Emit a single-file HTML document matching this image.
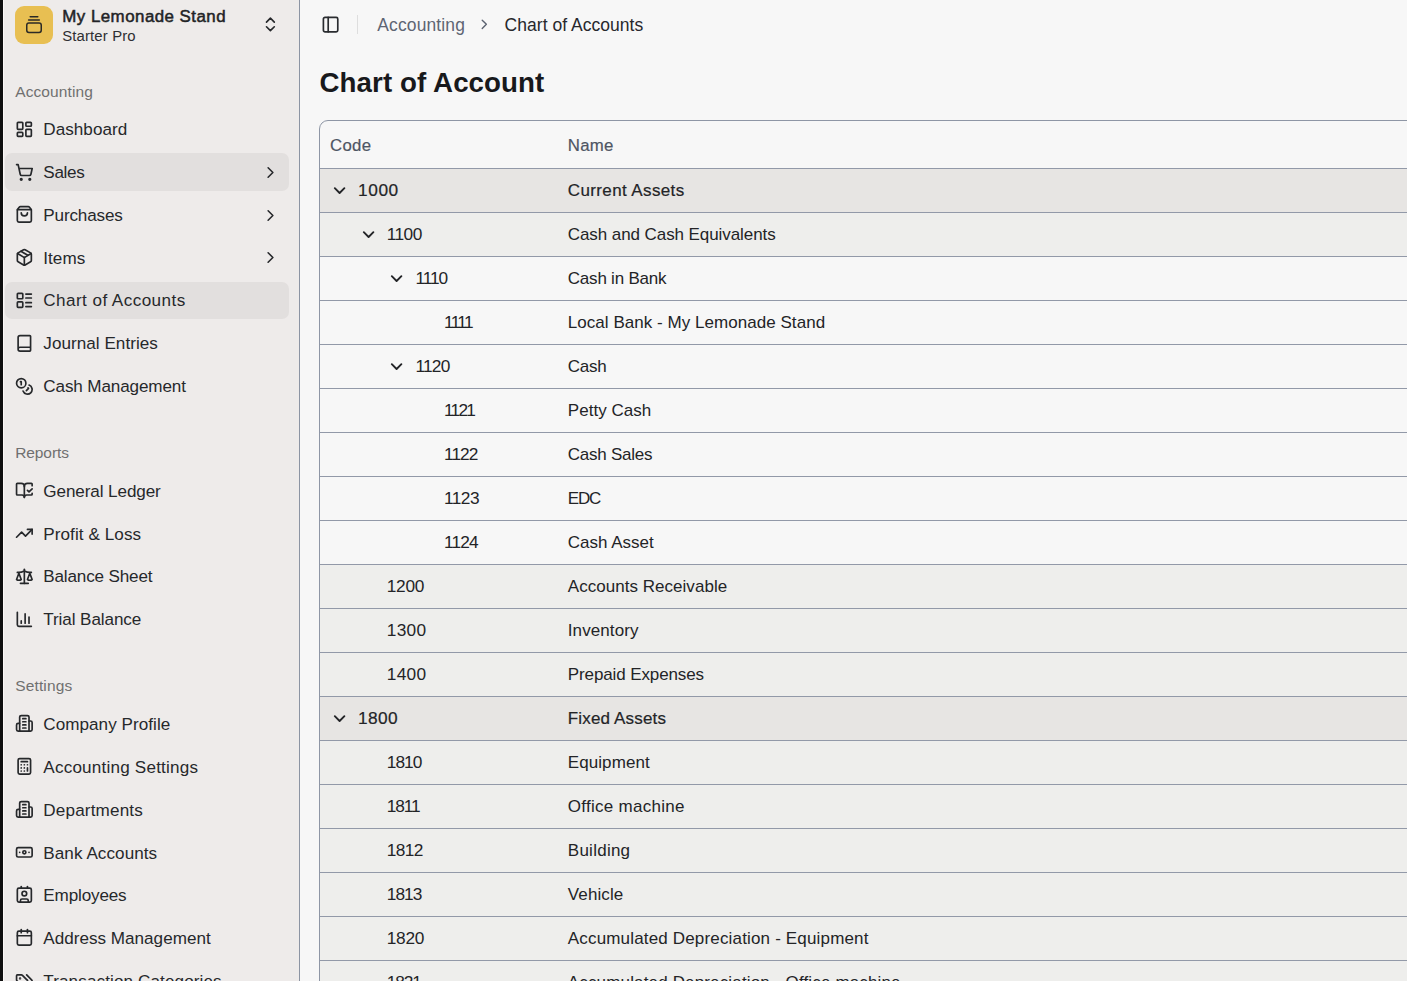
<!DOCTYPE html>
<html><head><meta charset="utf-8">
<style>
*{box-sizing:border-box;margin:0;padding:0}
html,body{width:1407px;height:981px;overflow:hidden}
body{background:#f7f7f7;font-family:"Liberation Sans",sans-serif;position:relative}
.abs,.t,.ic{position:absolute}
.t{white-space:nowrap;line-height:1}
</style></head>
<body>
<div class="abs" style="left:0;top:0;width:3px;height:981px;background:#0f0f0f"></div>
<div class="abs" style="left:3px;top:0;width:1px;height:981px;background:#fbf8f7"></div>
<div class="abs" style="left:4px;top:0;width:295px;height:981px;background:#eeebea"></div>
<div class="abs" style="left:299px;top:0;width:1px;height:981px;background:#8c94a3"></div>
<div class="abs" style="left:15px;top:6px;width:38px;height:38px;border-radius:9px;background:#e8bf52"></div>
<svg class="abs" style="left:15px;top:6px;width:38px;height:38px" viewBox="0 0 38 38" fill="none" stroke="#2b2a26" stroke-width="1.5" stroke-linecap="round"><path d="M15.2 10.8h7.6"/><path d="M13.6 13.9h10.7"/><rect x="11.75" y="17.05" width="14.5" height="9.5" rx="2.2"/></svg>
<div class="t" style="left:62.30px;top:9px;font-size:16.9px;color:#222326;font-weight:normal;letter-spacing:0.466px;-webkit-text-stroke:0.5px #222326;">My Lemonade Stand</div>
<div class="t" style="left:62.20px;top:29px;font-size:14.9px;color:#2e2f33;font-weight:normal;letter-spacing:0.140px;">Starter Pro</div>
<svg class="ic" style="left:261.20px;top:15.35px;width:18.8px;height:18.8px" viewBox="0 0 24 24" fill="none" stroke="#26282b" stroke-width="2.1" stroke-linecap="round" stroke-linejoin="round"><path d="m7 15 5 5 5-5"/><path d="m7 9 5-5 5 5"/></svg>
<div class="t" style="left:15.20px;top:84px;font-size:15.5px;color:#707070;font-weight:normal;letter-spacing:0.113px;">Accounting</div>
<svg class="ic" style="left:14.80px;top:119.85px;width:18.7px;height:18.7px" viewBox="0 0 24 24" fill="none" stroke="#26282b" stroke-width="2.15" stroke-linecap="round" stroke-linejoin="round"><rect width="7" height="9" x="3" y="3" rx="1"/><rect width="7" height="5" x="14" y="3" rx="1"/><rect width="7" height="9" x="14" y="12" rx="1"/><rect width="7" height="5" x="3" y="16" rx="1"/></svg>
<div class="t" style="left:43.30px;top:121px;font-size:17.1px;color:#26282b;font-weight:normal;letter-spacing:0.041px;">Dashboard</div>
<div class="abs" style="left:5px;top:153.40px;width:284.4px;height:37.7px;border-radius:7px;background:#e2dfde"></div>
<svg class="ic" style="left:14.80px;top:162.65px;width:18.7px;height:18.7px" viewBox="0 0 24 24" fill="none" stroke="#26282b" stroke-width="2.15" stroke-linecap="round" stroke-linejoin="round"><circle cx="8" cy="21" r="1"/><circle cx="19" cy="21" r="1"/><path d="M2.05 2.05h2l2.66 12.42a2 2 0 0 0 2 1.58h9.78a2 2 0 0 0 1.95-1.57l1.65-7.43H5.12"/></svg>
<div class="t" style="left:43.30px;top:164px;font-size:17.1px;color:#26282b;font-weight:normal;letter-spacing:-0.300px;">Sales</div>
<svg class="ic" style="left:260.90px;top:162.70px;width:19px;height:19px" viewBox="0 0 24 24" fill="none" stroke="#26282b" stroke-width="2" stroke-linecap="round" stroke-linejoin="round"><path d="m9 18 6-6-6-6"/></svg>
<svg class="ic" style="left:14.80px;top:205.45px;width:18.7px;height:18.7px" viewBox="0 0 24 24" fill="none" stroke="#26282b" stroke-width="2.15" stroke-linecap="round" stroke-linejoin="round"><path d="M16 10a4 4 0 0 1-8 0"/><path d="M3.103 6.034h17.794"/><path d="M3.4 5.467a2 2 0 0 0-.4 1.2V20a2 2 0 0 0 2 2h14a2 2 0 0 0 2-2V6.667a2 2 0 0 0-.4-1.2l-2-2.667A2 2 0 0 0 17 2H7a2 2 0 0 0-1.6.8z"/></svg>
<div class="t" style="left:43.30px;top:207px;font-size:17.1px;color:#26282b;font-weight:normal;letter-spacing:-0.159px;">Purchases</div>
<svg class="ic" style="left:260.90px;top:205.50px;width:19px;height:19px" viewBox="0 0 24 24" fill="none" stroke="#26282b" stroke-width="2" stroke-linecap="round" stroke-linejoin="round"><path d="m9 18 6-6-6-6"/></svg>
<svg class="ic" style="left:14.80px;top:248.25px;width:18.7px;height:18.7px" viewBox="0 0 24 24" fill="none" stroke="#26282b" stroke-width="2.15" stroke-linecap="round" stroke-linejoin="round"><path d="M11 21.73a2 2 0 0 0 2 0l7-4A2 2 0 0 0 21 16V8a2 2 0 0 0-1-1.73l-7-4a2 2 0 0 0-2 0l-7 4A2 2 0 0 0 3 8v8a2 2 0 0 0 1 1.73z"/><path d="M12 22V12"/><path d="m3.3 7 7.703 4.734a2 2 0 0 0 1.994 0L20.7 7"/><path d="m7.5 4.27 9 5.15"/></svg>
<div class="t" style="left:43.30px;top:250px;font-size:17.1px;color:#26282b;font-weight:normal;letter-spacing:0.025px;">Items</div>
<svg class="ic" style="left:260.90px;top:248.30px;width:19px;height:19px" viewBox="0 0 24 24" fill="none" stroke="#26282b" stroke-width="2" stroke-linecap="round" stroke-linejoin="round"><path d="m9 18 6-6-6-6"/></svg>
<div class="abs" style="left:5px;top:281.80px;width:284.4px;height:37.7px;border-radius:7px;background:#e2dfde"></div>
<svg class="ic" style="left:14.80px;top:291.05px;width:18.7px;height:18.7px" viewBox="0 0 24 24" fill="none" stroke="#26282b" stroke-width="2.15" stroke-linecap="round" stroke-linejoin="round"><rect width="7" height="7" x="3" y="3" rx="1"/><rect width="7" height="7" x="3" y="14" rx="1"/><path d="M14 4h7"/><path d="M14 9h7"/><path d="M14 15h7"/><path d="M14 20h7"/></svg>
<div class="t" style="left:43.30px;top:292px;font-size:17.1px;color:#26282b;font-weight:normal;letter-spacing:0.438px;">Chart of Accounts</div>
<svg class="ic" style="left:14.80px;top:333.85px;width:18.7px;height:18.7px" viewBox="0 0 24 24" fill="none" stroke="#26282b" stroke-width="2.15" stroke-linecap="round" stroke-linejoin="round"><path d="M4 19.5v-15A2.5 2.5 0 0 1 6.5 2H19a1 1 0 0 1 1 1v18a1 1 0 0 1-1 1H6.5a1 1 0 0 1 0-5H20"/></svg>
<div class="t" style="left:43.30px;top:335px;font-size:17.1px;color:#26282b;font-weight:normal;letter-spacing:0.036px;">Journal Entries</div>
<svg class="ic" style="left:14.80px;top:376.65px;width:18.7px;height:18.7px" viewBox="0 0 24 24" fill="none" stroke="#26282b" stroke-width="2.15" stroke-linecap="round" stroke-linejoin="round"><circle cx="8" cy="8" r="6"/><path d="M18.09 10.37A6 6 0 1 1 10.34 18"/><path d="M7 6h1v4"/><path d="m16.71 13.88.7.71-2.82 2.82"/></svg>
<div class="t" style="left:43.30px;top:378px;font-size:17.1px;color:#26282b;font-weight:normal;letter-spacing:-0.130px;">Cash Management</div>
<div class="t" style="left:15.20px;top:445px;font-size:15.5px;color:#707070;font-weight:normal;letter-spacing:-0.083px;">Reports</div>
<svg class="ic" style="left:14.80px;top:481.45px;width:18.7px;height:18.7px" viewBox="0 0 24 24" fill="none" stroke="#26282b" stroke-width="2.15" stroke-linecap="round" stroke-linejoin="round"><path d="M12 21V7"/><path d="m16 12 2 2 4-4"/><path d="M22 6V4a1 1 0 0 0-1-1h-5a4 4 0 0 0-4 4 4 4 0 0 0-4-4H3a1 1 0 0 0-1 1v13a1 1 0 0 0 1 1h6a3 3 0 0 1 3 3 3 3 0 0 1 3-3h6a1 1 0 0 0 1-1v-1.3"/></svg>
<div class="t" style="left:43.30px;top:483px;font-size:17.1px;color:#26282b;font-weight:normal;letter-spacing:-0.098px;">General Ledger</div>
<svg class="ic" style="left:14.80px;top:524.20px;width:18.7px;height:18.7px" viewBox="0 0 24 24" fill="none" stroke="#26282b" stroke-width="2.15" stroke-linecap="round" stroke-linejoin="round"><polyline points="22 7 13.5 15.5 8.5 10.5 2 17"/><polyline points="16 7 22 7 22 13"/></svg>
<div class="t" style="left:43.30px;top:526px;font-size:17.1px;color:#26282b;font-weight:normal;letter-spacing:0.074px;">Profit &amp; Loss</div>
<svg class="ic" style="left:14.80px;top:566.95px;width:18.7px;height:18.7px" viewBox="0 0 24 24" fill="none" stroke="#26282b" stroke-width="2.15" stroke-linecap="round" stroke-linejoin="round"><path d="m16 16 3-8 3 8c-.87.65-1.92 1-3 1s-2.13-.35-3-1Z"/><path d="m2 16 3-8 3 8c-.87.65-1.920 1-3 1s-2.13-.35-3-1Z"/><path d="M7 21h10"/><path d="M12 3v18"/><path d="M3 7h2c2 0 5-1 7-2 2 1 5 2 7 2h2"/></svg>
<div class="t" style="left:43.30px;top:568px;font-size:17.1px;color:#26282b;font-weight:normal;letter-spacing:-0.167px;">Balance Sheet</div>
<svg class="ic" style="left:14.80px;top:609.70px;width:18.7px;height:18.7px" viewBox="0 0 24 24" fill="none" stroke="#26282b" stroke-width="2.15" stroke-linecap="round" stroke-linejoin="round"><path d="M3 3v16a2 2 0 0 0 2 2h16"/><path d="M18 17V9"/><path d="M13 17V5"/><path d="M8 17v-3"/></svg>
<div class="t" style="left:43.30px;top:611px;font-size:17.1px;color:#26282b;font-weight:normal;letter-spacing:-0.092px;">Trial Balance</div>
<div class="t" style="left:15.20px;top:678px;font-size:15.5px;color:#707070;font-weight:normal;letter-spacing:0.141px;">Settings</div>
<svg class="ic" style="left:14.80px;top:714.35px;width:18.7px;height:18.7px" viewBox="0 0 24 24" fill="none" stroke="#26282b" stroke-width="2.15" stroke-linecap="round" stroke-linejoin="round"><path d="M6 22V4a2 2 0 0 1 2-2h8a2 2 0 0 1 2 2v18Z"/><path d="M6 12H4a2 2 0 0 0-2 2v6a2 2 0 0 0 2 2h2"/><path d="M18 9h2a2 2 0 0 1 2 2v9a2 2 0 0 1-2 2h-2"/><path d="M10 6h4"/><path d="M10 10h4"/><path d="M10 14h4"/><path d="M10 18h4"/></svg>
<div class="t" style="left:43.30px;top:716px;font-size:17.1px;color:#26282b;font-weight:normal;letter-spacing:0.044px;">Company Profile</div>
<svg class="ic" style="left:14.80px;top:757.10px;width:18.7px;height:18.7px" viewBox="0 0 24 24" fill="none" stroke="#26282b" stroke-width="2.15" stroke-linecap="round" stroke-linejoin="round"><rect width="16" height="20" x="4" y="2" rx="2"/><line x1="8" x2="16" y1="6" y2="6"/><line x1="16" x2="16" y1="14" y2="18"/><path d="M16 10h.01"/><path d="M12 10h.01"/><path d="M8 10h.01"/><path d="M12 14h.01"/><path d="M8 14h.01"/><path d="M12 18h.01"/><path d="M8 18h.01"/></svg>
<div class="t" style="left:43.30px;top:759px;font-size:17.1px;color:#26282b;font-weight:normal;letter-spacing:0.200px;">Accounting Settings</div>
<svg class="ic" style="left:14.80px;top:799.85px;width:18.7px;height:18.7px" viewBox="0 0 24 24" fill="none" stroke="#26282b" stroke-width="2.15" stroke-linecap="round" stroke-linejoin="round"><path d="M6 22V4a2 2 0 0 1 2-2h8a2 2 0 0 1 2 2v18Z"/><path d="M6 12H4a2 2 0 0 0-2 2v6a2 2 0 0 0 2 2h2"/><path d="M18 9h2a2 2 0 0 1 2 2v9a2 2 0 0 1-2 2h-2"/><path d="M10 6h4"/><path d="M10 10h4"/><path d="M10 14h4"/><path d="M10 18h4"/></svg>
<div class="t" style="left:43.30px;top:802px;font-size:17.1px;color:#26282b;font-weight:normal;letter-spacing:0.160px;">Departments</div>
<svg class="ic" style="left:14.80px;top:842.60px;width:18.7px;height:18.7px" viewBox="0 0 24 24" fill="none" stroke="#26282b" stroke-width="2.15" stroke-linecap="round" stroke-linejoin="round"><rect width="20" height="12" x="2" y="6" rx="2"/><circle cx="12" cy="12" r="2"/><path d="M6 12h.01M18 12h.01"/></svg>
<div class="t" style="left:43.30px;top:845px;font-size:17.1px;color:#26282b;font-weight:normal;letter-spacing:0.066px;">Bank Accounts</div>
<svg class="ic" style="left:14.80px;top:885.35px;width:18.7px;height:18.7px" viewBox="0 0 24 24" fill="none" stroke="#26282b" stroke-width="2.15" stroke-linecap="round" stroke-linejoin="round"><path d="M16 2v2"/><path d="M7 22v-2a2 2 0 0 1 2-2h6a2 2 0 0 1 2 2v2"/><path d="M8 2v2"/><circle cx="12" cy="11" r="3"/><rect x="3" y="4" width="18" height="18" rx="2"/></svg>
<div class="t" style="left:43.30px;top:887px;font-size:17.1px;color:#26282b;font-weight:normal;letter-spacing:-0.150px;">Employees</div>
<svg class="ic" style="left:14.80px;top:928.10px;width:18.7px;height:18.7px" viewBox="0 0 24 24" fill="none" stroke="#26282b" stroke-width="2.15" stroke-linecap="round" stroke-linejoin="round"><path d="M8 2v4"/><path d="M16 2v4"/><rect width="18" height="18" x="3" y="4" rx="2"/><path d="M3 10h18"/></svg>
<div class="t" style="left:43.30px;top:930px;font-size:17.1px;color:#26282b;font-weight:normal;letter-spacing:0.009px;">Address Management</div>
<svg class="ic" style="left:14.80px;top:970.85px;width:18.7px;height:18.7px" viewBox="0 0 24 24" fill="none" stroke="#26282b" stroke-width="2.15" stroke-linecap="round" stroke-linejoin="round"><path d="m15 5 6.3 6.3a2.4 2.4 0 0 1 0 3.4L17 19"/><path d="M9.586 5.586A2 2 0 0 0 8.172 5H3a1 1 0 0 0-1 1v5.172a2 2 0 0 0 .586 1.414L8.29 18.29a2.426 2.426 0 0 0 3.42 0l3.58-3.58a2 2 0 0 0 0-3.42z"/><circle cx="6.5" cy="9.5" r=".5" fill="currentColor"/></svg>
<div class="t" style="left:43.30px;top:973px;font-size:17.1px;color:#26282b;font-weight:normal;letter-spacing:0.106px;">Transaction Categories</div>
<svg class="ic" style="left:321.35px;top:15.25px;width:19.2px;height:19.2px" viewBox="0 0 24 24" fill="none" stroke="#2a2c30" stroke-width="2.1" stroke-linecap="round" stroke-linejoin="round"><rect width="18" height="18" x="3" y="3" rx="2"/><path d="M9 3v18"/></svg>
<div class="abs" style="left:357px;top:15px;width:1px;height:19px;background:#dedede"></div>
<div class="t" style="left:377.30px;top:17px;font-size:17.45px;color:#5e6573;font-weight:normal;letter-spacing:0.145px;">Accounting</div>
<svg class="ic" style="left:476.20px;top:16.45px;width:16.6px;height:16.6px" viewBox="0 0 24 24" fill="none" stroke="#5b6270" stroke-width="2" stroke-linecap="round" stroke-linejoin="round"><path d="m9 18 6-6-6-6"/></svg>
<div class="t" style="left:504.60px;top:17px;font-size:17.5px;color:#27282c;font-weight:normal;letter-spacing:0.031px;">Chart of Accounts</div>
<div class="t" style="left:319.50px;top:69px;font-size:27.7px;color:#18191c;font-weight:bold;letter-spacing:0.085px;">Chart of Account</div>
<div class="abs" style="left:319px;top:120px;width:1200px;height:900px;border:1px solid #8e96a5;border-radius:9px;background:#f7f7f7;overflow:hidden"></div>
<div class="t" style="left:330.00px;top:138px;font-size:16.8px;color:#4e5563;font-weight:normal;letter-spacing:0.333px;-webkit-text-stroke:0.2px #4e5563;">Code</div>
<div class="t" style="left:567.80px;top:138px;font-size:16.8px;color:#4e5563;font-weight:normal;letter-spacing:0.266px;-webkit-text-stroke:0.2px #4e5563;">Name</div>
<div class="abs" style="left:320px;top:168px;width:1087px;height:44px;background:#e7e5e3;border-top:1px solid #9299a8"></div>
<div class="t" style="left:358.10px;top:182px;font-size:17.3px;color:#232427;font-weight:normal;letter-spacing:0.533px;-webkit-text-stroke:0.2px #232427;">1000</div>
<div class="t" style="left:567.80px;top:182px;font-size:17.0px;color:#232427;font-weight:normal;letter-spacing:0.377px;-webkit-text-stroke:0.2px #232427;">Current Assets</div>
<svg class="ic" style="left:329.90px;top:180.80px;width:19.2px;height:19.2px" viewBox="0 0 24 24" fill="none" stroke="#232427" stroke-width="2.35" stroke-linecap="round" stroke-linejoin="round"><path d="m6 9 6 6 6-6"/></svg>
<div class="abs" style="left:320px;top:212px;width:1087px;height:44px;background:#eeeeec;border-top:1px solid #9299a8"></div>
<div class="t" style="left:386.75px;top:226px;font-size:17.3px;color:#232427;font-weight:normal;letter-spacing:-0.532px;">1100</div>
<div class="t" style="left:567.80px;top:226px;font-size:17.0px;color:#232427;font-weight:normal;letter-spacing:-0.081px;">Cash and Cash Equivalents</div>
<svg class="ic" style="left:358.55px;top:224.80px;width:19.2px;height:19.2px" viewBox="0 0 24 24" fill="none" stroke="#232427" stroke-width="2.35" stroke-linecap="round" stroke-linejoin="round"><path d="m6 9 6 6 6-6"/></svg>
<div class="abs" style="left:320px;top:256px;width:1087px;height:44px;background:#f7f7f7;border-top:1px solid #9299a8"></div>
<div class="t" style="left:415.40px;top:270px;font-size:17.3px;color:#232427;font-weight:normal;letter-spacing:-1.034px;">1110</div>
<div class="t" style="left:567.80px;top:270px;font-size:17.0px;color:#232427;font-weight:normal;letter-spacing:-0.217px;">Cash in Bank</div>
<svg class="ic" style="left:387.20px;top:268.80px;width:19.2px;height:19.2px" viewBox="0 0 24 24" fill="none" stroke="#232427" stroke-width="2.35" stroke-linecap="round" stroke-linejoin="round"><path d="m6 9 6 6 6-6"/></svg>
<div class="abs" style="left:320px;top:300px;width:1087px;height:44px;background:#f7f7f7;border-top:1px solid #9299a8"></div>
<div class="t" style="left:444.05px;top:314px;font-size:17.3px;color:#232427;font-weight:normal;letter-spacing:-1.700px;">1111</div>
<div class="t" style="left:567.80px;top:314px;font-size:17.0px;color:#232427;font-weight:normal;letter-spacing:0.041px;">Local Bank - My Lemonade Stand</div>
<div class="abs" style="left:320px;top:344px;width:1087px;height:44px;background:#f7f7f7;border-top:1px solid #9299a8"></div>
<div class="t" style="left:415.40px;top:358px;font-size:17.3px;color:#232427;font-weight:normal;letter-spacing:-0.768px;">1120</div>
<div class="t" style="left:567.80px;top:358px;font-size:17.0px;color:#232427;font-weight:normal;letter-spacing:-0.299px;">Cash</div>
<svg class="ic" style="left:387.20px;top:356.80px;width:19.2px;height:19.2px" viewBox="0 0 24 24" fill="none" stroke="#232427" stroke-width="2.35" stroke-linecap="round" stroke-linejoin="round"><path d="m6 9 6 6 6-6"/></svg>
<div class="abs" style="left:320px;top:388px;width:1087px;height:44px;background:#f7f7f7;border-top:1px solid #9299a8"></div>
<div class="t" style="left:444.05px;top:402px;font-size:17.3px;color:#232427;font-weight:normal;letter-spacing:-1.768px;">1121</div>
<div class="t" style="left:567.80px;top:402px;font-size:17.0px;color:#232427;font-weight:normal;letter-spacing:0.034px;">Petty Cash</div>
<div class="abs" style="left:320px;top:432px;width:1087px;height:44px;background:#f7f7f7;border-top:1px solid #9299a8"></div>
<div class="t" style="left:444.05px;top:446px;font-size:17.3px;color:#232427;font-weight:normal;letter-spacing:-0.966px;">1122</div>
<div class="t" style="left:567.80px;top:446px;font-size:17.0px;color:#232427;font-weight:normal;letter-spacing:-0.256px;">Cash Sales</div>
<div class="abs" style="left:320px;top:476px;width:1087px;height:44px;background:#f7f7f7;border-top:1px solid #9299a8"></div>
<div class="t" style="left:444.05px;top:490px;font-size:17.3px;color:#232427;font-weight:normal;letter-spacing:-0.565px;">1123</div>
<div class="t" style="left:567.80px;top:490px;font-size:17.0px;color:#232427;font-weight:normal;letter-spacing:-1.200px;">EDC</div>
<div class="abs" style="left:320px;top:520px;width:1087px;height:44px;background:#f7f7f7;border-top:1px solid #9299a8"></div>
<div class="t" style="left:444.05px;top:534px;font-size:17.3px;color:#232427;font-weight:normal;letter-spacing:-0.898px;">1124</div>
<div class="t" style="left:567.80px;top:534px;font-size:17.0px;color:#232427;font-weight:normal;letter-spacing:-0.009px;">Cash Asset</div>
<div class="abs" style="left:320px;top:564px;width:1087px;height:44px;background:#eeeeec;border-top:1px solid #9299a8"></div>
<div class="t" style="left:386.75px;top:578px;font-size:17.3px;color:#232427;font-weight:normal;letter-spacing:-0.265px;">1200</div>
<div class="t" style="left:567.80px;top:578px;font-size:17.0px;color:#232427;font-weight:normal;letter-spacing:0.033px;">Accounts Receivable</div>
<div class="abs" style="left:320px;top:608px;width:1087px;height:44px;background:#eeeeec;border-top:1px solid #9299a8"></div>
<div class="t" style="left:386.75px;top:622px;font-size:17.3px;color:#232427;font-weight:normal;letter-spacing:0.265px;">1300</div>
<div class="t" style="left:567.80px;top:622px;font-size:17.0px;color:#232427;font-weight:normal;letter-spacing:0.091px;">Inventory</div>
<div class="abs" style="left:320px;top:652px;width:1087px;height:44px;background:#eeeeec;border-top:1px solid #9299a8"></div>
<div class="t" style="left:386.75px;top:666px;font-size:17.3px;color:#232427;font-weight:normal;letter-spacing:0.265px;">1400</div>
<div class="t" style="left:567.80px;top:666px;font-size:17.0px;color:#232427;font-weight:normal;letter-spacing:-0.115px;">Prepaid Expenses</div>
<div class="abs" style="left:320px;top:696px;width:1087px;height:44px;background:#e7e5e3;border-top:1px solid #9299a8"></div>
<div class="t" style="left:358.10px;top:710px;font-size:17.3px;color:#232427;font-weight:normal;letter-spacing:0.333px;-webkit-text-stroke:0.2px #232427;">1800</div>
<div class="t" style="left:567.80px;top:710px;font-size:17.0px;color:#232427;font-weight:normal;letter-spacing:0.161px;-webkit-text-stroke:0.2px #232427;">Fixed Assets</div>
<svg class="ic" style="left:329.90px;top:708.80px;width:19.2px;height:19.2px" viewBox="0 0 24 24" fill="none" stroke="#232427" stroke-width="2.35" stroke-linecap="round" stroke-linejoin="round"><path d="m6 9 6 6 6-6"/></svg>
<div class="abs" style="left:320px;top:740px;width:1087px;height:44px;background:#eeeeec;border-top:1px solid #9299a8"></div>
<div class="t" style="left:386.75px;top:754px;font-size:17.3px;color:#232427;font-weight:normal;letter-spacing:-0.932px;">1810</div>
<div class="t" style="left:567.80px;top:754px;font-size:17.0px;color:#232427;font-weight:normal;letter-spacing:0.075px;">Equipment</div>
<div class="abs" style="left:320px;top:784px;width:1087px;height:44px;background:#eeeeec;border-top:1px solid #9299a8"></div>
<div class="t" style="left:386.75px;top:798px;font-size:17.3px;color:#232427;font-weight:normal;letter-spacing:-1.134px;">1811</div>
<div class="t" style="left:567.80px;top:798px;font-size:17.0px;color:#232427;font-weight:normal;letter-spacing:0.279px;">Office machine</div>
<div class="abs" style="left:320px;top:828px;width:1087px;height:44px;background:#eeeeec;border-top:1px solid #9299a8"></div>
<div class="t" style="left:386.75px;top:842px;font-size:17.3px;color:#232427;font-weight:normal;letter-spacing:-0.599px;">1812</div>
<div class="t" style="left:567.80px;top:842px;font-size:17.0px;color:#232427;font-weight:normal;letter-spacing:0.256px;">Building</div>
<div class="abs" style="left:320px;top:872px;width:1087px;height:44px;background:#eeeeec;border-top:1px solid #9299a8"></div>
<div class="t" style="left:386.75px;top:886px;font-size:17.3px;color:#232427;font-weight:normal;letter-spacing:-0.932px;">1813</div>
<div class="t" style="left:567.80px;top:886px;font-size:17.0px;color:#232427;font-weight:normal;letter-spacing:0.118px;">Vehicle</div>
<div class="abs" style="left:320px;top:916px;width:1087px;height:44px;background:#eeeeec;border-top:1px solid #9299a8"></div>
<div class="t" style="left:386.75px;top:930px;font-size:17.3px;color:#232427;font-weight:normal;letter-spacing:-0.265px;">1820</div>
<div class="t" style="left:567.80px;top:930px;font-size:17.0px;color:#232427;font-weight:normal;letter-spacing:0.167px;">Accumulated Depreciation - Equipment</div>
<div class="abs" style="left:320px;top:960px;width:1087px;height:44px;background:#eeeeec;border-top:1px solid #9299a8"></div>
<div class="t" style="left:386.75px;top:974px;font-size:17.3px;color:#232427;font-weight:normal;letter-spacing:-1.133px;">1821</div>
<div class="t" style="left:567.80px;top:974px;font-size:17.0px;color:#232427;font-weight:normal;letter-spacing:0.154px;">Accumulated Depreciation - Office machine</div>
</body></html>
